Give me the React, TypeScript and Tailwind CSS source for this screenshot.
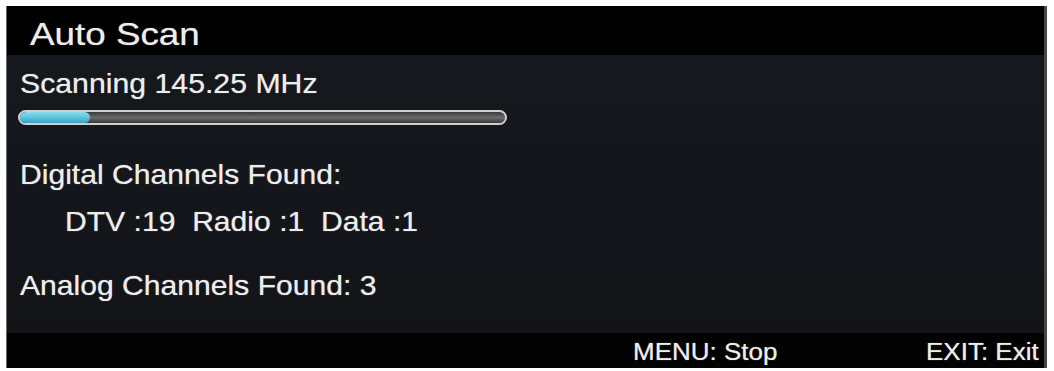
export default function App() {
  const font = { fontFamily: '"Liberation Sans", Arial, sans-serif' };
  return (
    <div className="w-[1054px] h-[371px] bg-white pt-[6px] pl-[6px] overflow-hidden" style={font}>
      <div className="w-[1041px] h-[362px] flex flex-col bg-[#121418] border-r-[3px] border-l border-l-[#6a6a6a] border-r-[#474747] text-[#ededed] [text-shadow:0_0_1px_rgba(255,255,255,0.6)]">
        {/* header */}
        <div className="h-[49px] shrink-0 bg-black pl-[23px] pt-[12px]">
          <div className="text-[32px] leading-[32px] inline-block origin-left scale-x-[1.15] whitespace-nowrap">Auto Scan</div>
        </div>
        {/* body */}
        <div className="flex-1 flex flex-col items-start pl-[13px] pt-[15px] text-[28px] leading-[28px] bg-linear-to-b from-[#15181c] to-[#121418]">
          <div className="origin-left scale-x-[1.08] whitespace-nowrap">Scanning 145.25 MHz</div>
          <div className="mt-[12px] ml-[-2px] w-[489px] h-[15px] rounded-full border-2 border-[#cfcfcf] bg-linear-to-b from-[#3a3a3a] via-[#6a6a6a] to-[#3a3a3a] overflow-hidden">
            <div className="h-full w-[70px] rounded-full bg-linear-to-b from-[#8adcec] via-[#5cc4dc] to-[#3aa2c0]" />
          </div>
          <div className="mt-[36px] origin-left scale-x-[1.075] whitespace-nowrap">Digital Channels Found:</div>
          <div className="mt-[19px] ml-[45px] origin-left scale-x-[1.075] whitespace-nowrap">DTV :19&nbsp;&nbsp;Radio :1&nbsp;&nbsp;Data :1</div>
          <div className="mt-[36px] origin-left scale-x-[1.075] whitespace-nowrap">Analog Channels Found: 3</div>
        </div>
        {/* footer */}
        <div className="h-[35px] shrink-0 bg-[#030303] flex text-[23px] leading-[23px] pt-[8px] pl-[626px] pr-[5px]">
          <div className="w-[150px] whitespace-nowrap">
            <div className="inline-block origin-left scale-x-[1.13]">MENU: Stop</div>
          </div>
          <div className="flex-1 flex justify-end whitespace-nowrap">
            <div className="inline-block origin-right scale-x-[1.13]">EXIT: Exit</div>
          </div>
        </div>
      </div>
    </div>
  );
}
